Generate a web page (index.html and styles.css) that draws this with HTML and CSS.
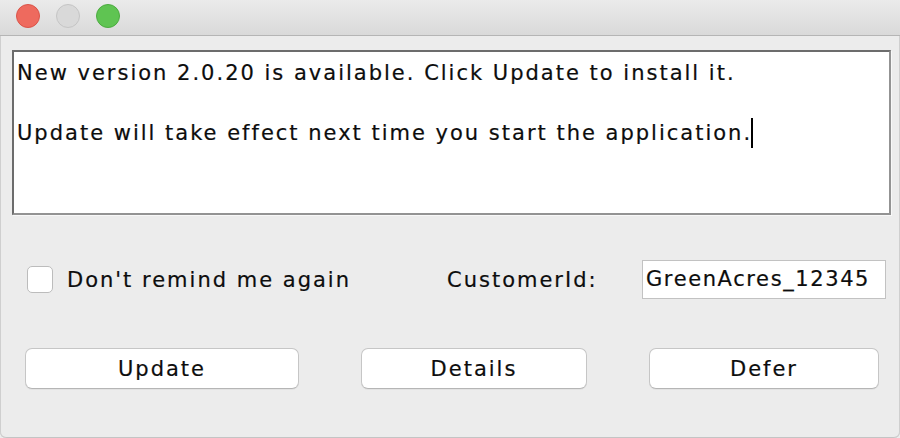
FILE: index.html
```html
<!DOCTYPE html>
<html>
<head>
<meta charset="utf-8">
<link rel="stylesheet" href="styles.css">
</head>
<body>
<div class="window">
  <div class="titlebar">
    <span class="light red"></span>
    <span class="light gray"></span>
    <span class="light green"></span>
  </div>
  <div class="content">
    <div class="message">
      <div class="line">New version 2.0.20 is available. Click Update to install it.</div>
      <div class="line">&nbsp;</div>
      <div class="line">Update will take effect next time you start the application.<span class="caret"></span></div>
    </div>
    <div class="options">
      <label class="check">
        <span class="box"></span>
        <span class="check-text">Don't remind me again</span>
      </label>
      <span class="field-label">CustomerId:</span>
      <div class="field">GreenAcres_12345</div>
    </div>
    <div class="buttons">
      <button class="btn btn-update">Update</button>
      <button class="btn btn-details">Details</button>
      <button class="btn btn-defer">Defer</button>
    </div>
  </div>
</div>
</body>
</html>
```

FILE: styles.css
```css
* { box-sizing: border-box; }
html, body {
  margin: 0;
  padding: 0;
  background: #ececec;
}
body {
  font-family: "DejaVu Sans", "Verdana", sans-serif;
  font-size: 21px;
  letter-spacing: 2px;
  color: #0d0d0d;
  -webkit-text-stroke: 0.2px #0d0d0d;
}
.window {
  width: 900px;
  height: 438px;
  background: #ececec;
  border-radius: 0 0 6px 6px;
  box-shadow: inset 1px 0 0 #cfcfcf, inset -1px 0 0 #cfcfcf, inset 0 -1px 0 #c4c4c4;
  overflow: hidden;
}
.titlebar {
  height: 36px;
  background: linear-gradient(#ebebeb, #d9d9d9);
  border-bottom: 1px solid #b5b5b5;
  display: flex;
  align-items: flex-start;
  padding: 4px 0 0 16px;
  gap: 16px;
}
.light {
  width: 24px;
  height: 24px;
  border-radius: 50%;
  display: block;
}
.red { background: #ee6a5e; border: 1px solid #da5449; }
.gray { background: #d9d9d9; border: 1px solid #c5c5c5; }
.green { background: #5fc452; border: 1px solid #4cab40; }

.content {
  padding: 14px 9px 0 12px;
}
.message {
  height: 165px;
  background: #fff;
  border-style: solid;
  border-width: 2px;
  border-color: #6c6c6c #939393 #939393 #6c6c6c;
  box-shadow: 1px 1px 0 #f8f8f8;
  padding: 6px 3px 0 3px;
  line-height: 30px;
}
.caret {
  display: inline-block;
  width: 0;
  height: 30px;
  border-left: 2px solid #000;
  vertical-align: -8px;
  margin-left: -1px;
}
.options {
  margin-top: 45px;
  height: 39px;
  display: grid;
  grid-template-columns: 420px 195px 244px;
  align-items: center;
  padding-left: 15px;
}
.check {
  display: flex;
  align-items: center;
  gap: 14px;
}
.box {
  width: 26px;
  height: 27px;
  background: #fff;
  border: 1px solid #bcbcbc;
  border-radius: 5px;
  display: block;
  flex: none;
}
.field {
  height: 39px;
  background: #fff;
  border: 1px solid #c2c2c2;
  padding: 0 0 0 3px;
  line-height: 37px;
  letter-spacing: 1.6px;
  white-space: nowrap;
  overflow: hidden;
}
.buttons {
  margin-top: 49px;
  padding-left: 13px;
  display: flex;
  gap: 62px;
}
.btn {
  height: 41px;
  background: #fff;
  border: 1px solid #c6c6c6;
  border-bottom-color: #b5b5b5;
  border-radius: 7px;
  font: inherit;
  letter-spacing: inherit;
  color: inherit;
  padding: 0;
  box-shadow: 0 1px 0 rgba(0,0,0,0.04);
}
.btn-update { width: 274px; }
.btn-details { width: 226px; }
.btn-defer { width: 230px; }
```
